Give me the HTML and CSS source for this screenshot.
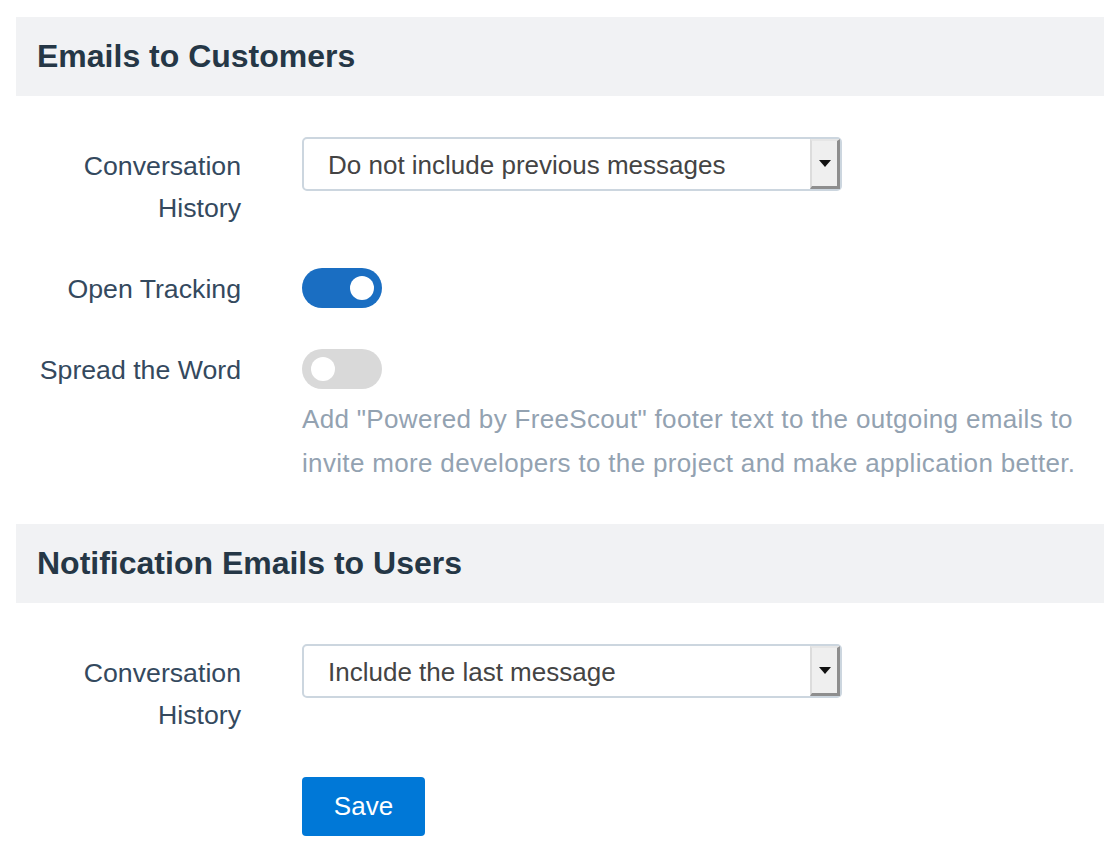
FILE: index.html
```html
<!DOCTYPE html>
<html lang="en">
<head>
<meta charset="utf-8">
<title>Email Settings</title>
<link rel="stylesheet" href="styles.css">
</head>
<body>
<div class="settings">
  <div class="section-head"><h2>Emails to Customers</h2></div>

  <div class="form-row">
    <label class="field-label">Conversation<br>History</label>
    <div class="field">
      <div class="select">
        <span class="select-value">Do not include previous messages</span>
        <span class="select-btn"><span class="caret"></span></span>
      </div>
    </div>
  </div>

  <div class="form-row">
    <label class="field-label flat">Open Tracking</label>
    <div class="field">
      <span class="toggle on"><span class="knob"></span></span>
    </div>
  </div>

  <div class="form-row">
    <label class="field-label flat">Spread the Word</label>
    <div class="field">
      <span class="toggle"><span class="knob"></span></span>
      <p class="help">Add "Powered by FreeScout" footer text to the outgoing emails to invite more developers to the project and make application better.</p>
    </div>
  </div>

  <div class="section-head"><h2>Notification Emails to Users</h2></div>

  <div class="form-row">
    <label class="field-label">Conversation<br>History</label>
    <div class="field">
      <div class="select">
        <span class="select-value">Include the last message</span>
        <span class="select-btn"><span class="caret"></span></span>
      </div>
    </div>
  </div>

  <div class="form-row actions">
    <div class="field-label"></div>
    <div class="field">
      <button class="btn-save" type="button">Save</button>
    </div>
  </div>
</div>
</body>
</html>
```

FILE: styles.css
```css
html, body {
  margin: 0;
  padding: 0;
  background: #ffffff;
}

body {
  font-family: "Liberation Sans", Arial, Helvetica, sans-serif;
  color: #34495e;
}

.settings {
  padding: 17px 0 0 16px;
}

.section-head {
  background: #f1f2f4;
  height: 79px;
  display: flex;
  align-items: center;
  padding-left: 21px;
  margin-bottom: 41px;
}

.section-head h2 {
  margin: 0;
  font-size: 32px;
  font-weight: bold;
  color: #253746;
}

.form-row {
  display: flex;
  align-items: flex-start;
  margin-bottom: 39px;
}

.field-label {
  width: 225px;
  flex: none;
  text-align: right;
  font-size: 26.7px;
  line-height: 42px;
  padding-top: 8px;
  color: #34495e;
}

.field-label.flat {
  padding-top: 0;
}

.field {
  margin-left: 61px;
  flex: 1;
}

/* select box with a classic bevelled drop button */
.select {
  width: 540px;
  height: 54px;
  box-sizing: border-box;
  border: 2px solid #ccd6df;
  border-radius: 5px;
  display: flex;
  align-items: stretch;
  background: #fff;
}

.select-value {
  flex: 1;
  padding-left: 24px;
  font-size: 26px;
  line-height: 52px;
  color: #444444;
}

.select-btn {
  width: 30px;
  box-sizing: border-box;
  background: #efefef;
  border-left: 2px solid #dcdcdc;
  border-top: 2px solid #e6e6e6;
  border-right: 3px solid #8e8e8e;
  border-bottom: 3px solid #8e8e8e;
  display: flex;
  align-items: center;
  justify-content: center;
}

.caret {
  width: 0;
  height: 0;
  border-left: 6px solid transparent;
  border-right: 6px solid transparent;
  border-top: 7px solid #111;
}

/* switches */
.toggle {
  display: block;
  width: 80px;
  height: 40px;
  border-radius: 20px;
  background: #d9d9d9;
  position: relative;
}

.toggle.on {
  background: #1a6ec2;
}

.knob {
  position: absolute;
  top: 8px;
  left: 9px;
  width: 24px;
  height: 24px;
  border-radius: 50%;
  background: #ffffff;
}

.toggle.on .knob {
  left: 48px;
}

.help {
  margin: 8px 0 0;
  font-size: 26px;
  line-height: 44px;
  letter-spacing: 0.33px;
  color: #93a2b1;
}

.actions {
  margin-top: 41px;
}

.btn-save {
  width: 123px;
  height: 59px;
  border: none;
  border-radius: 4px;
  background: #0078d7;
  color: #ffffff;
  font-family: "Liberation Sans", Arial, sans-serif;
  font-size: 26px;
  padding: 0;
}
```
